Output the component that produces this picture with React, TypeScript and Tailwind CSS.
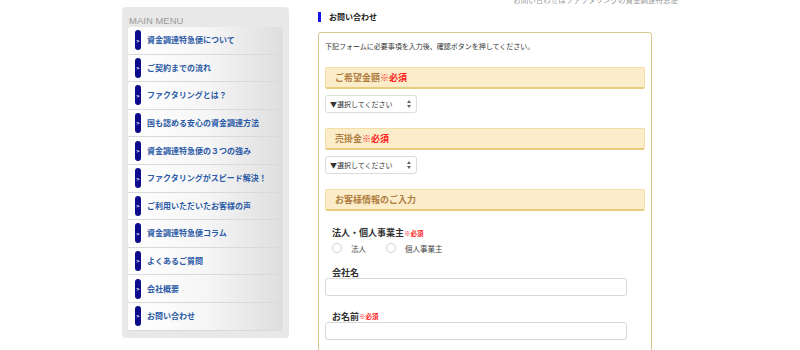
const menu = [
  "資金調達特急便について",
  "ご契約までの流れ",
  "ファクタリングとは？",
  "国も認める安心の資金調達方法",
  "資金調達特急便の３つの強み",
  "ファクタリングがスピード解決！",
  "ご利用いただいたお客様の声",
  "資金調達特急便コラム",
  "よくあるご質問",
  "会社概要",
  "お問い合わせ",
];

const jp = { fontFamily: '"Noto Sans CJK JP", "Noto Sans", sans-serif' };

function SectionHead({ label, required }: { label: string; required?: boolean }) {
  return (
    <div className="h-[22px] flex items-center px-[9px] bg-[#fbedca] border border-[#f3dfa6] border-b-[#e8cd7f] border-b-2 rounded-[2px] text-[9px] font-bold text-[#b07d40]">
      {label}
      {required && <span className="text-[#ff1a1a]">※必須</span>}
    </div>
  );
}

function SelectBox() {
  return (
    <div className="w-[92px] h-[18px] flex items-center justify-between pl-[4px] pr-[5px] border border-[#dcdcdc] rounded-[3px] bg-white text-[7px] text-[#333]">
      <span className="whitespace-nowrap">▼選択してください</span>
      <svg width="4" height="8" viewBox="0 0 4 8" className="fill-[#666]">
        <path d="M2 0 L4 3 L0 3 Z" />
        <path d="M0 5 L4 5 L2 8 Z" />
      </svg>
    </div>
  );
}

function Radio({ label }: { label: string }) {
  return (
    <div className="flex items-center gap-[9px]">
      <span className="w-[10px] h-[10px] rounded-full border border-[#cfcfcf] bg-white" />
      <span className="text-[7.5px] text-[#444]">{label}</span>
    </div>
  );
}

export default function App() {
  return (
    <div className="w-[800px] h-[350px] overflow-hidden bg-white flex items-start" style={jp}>
      <aside className="ml-[122px] mt-[7px] w-[167px] shrink-0 bg-[#e8e8e8] rounded-[4px] px-[6px] pb-[7px]">
        <div
          className="h-[19px] flex items-end pl-[1px] text-[9.5px] leading-[10px] text-[#9a9a9a]"
          style={{ fontFamily: '"Liberation Sans", Arial, sans-serif' }}
        >
          MAIN MENU
        </div>
        <ul className="mt-[1px] rounded-[3px] overflow-hidden">
          {menu.map((m) => (
            <li
              key={m}
              className="h-[27.6px] flex items-center border-b border-[#d9d9d9] bg-gradient-to-r from-white via-[#f6f6f6] to-[#dedede]"
            >
              <span className="ml-[7px] w-[6px] h-[20px] rounded-full bg-[#0b0b8c] flex items-center justify-center text-white text-[5px] font-bold">
                &gt;
              </span>
              <span className="ml-[6px] text-[8px] font-bold text-[#2b5aa6] whitespace-nowrap">{m}</span>
            </li>
          ))}
        </ul>
      </aside>

      <main className="ml-[29px] w-[360px] shrink-0">
        <div className="-mt-[4px] h-[8px] text-right text-[7.5px] leading-[8px] text-[#999] whitespace-nowrap">
          お問い合わせはファクタリングの資金調達特急便
        </div>
        <div className="mt-[8px] flex items-center h-[10px]">
          <span className="w-[3px] h-[10px] bg-[#1414e6]" />
          <span className="ml-[8px] text-[8px] font-bold text-[#222]">お問い合わせ</span>
        </div>

        <div className="mt-[10px] w-[334px] border border-[#d6c68e] rounded-[3px] px-[6px] pt-[7px] pb-[20px]">
          <p className="text-[7px] leading-[12px] text-[#333]">
            下記フォームに必要事項を入力後、確認ボタンを押してください。
          </p>

          <div className="mt-[15px]">
            <SectionHead label="ご希望金額" required />
          </div>
          <div className="mt-[6px]">
            <SelectBox />
          </div>

          <div className="mt-[15px]">
            <SectionHead label="売掛金" required />
          </div>
          <div className="mt-[6px]">
            <SelectBox />
          </div>

          <div className="mt-[15px]">
            <SectionHead label="お客様情報のご入力" />
          </div>

          <div className="mt-[15px] pl-[7px] flex items-end text-[9px] font-bold text-[#333]">
            法人・個人事業主
            <span className="text-[6.5px] text-[#ff1a1a] mb-[1px]">※必須</span>
          </div>
          <div className="mt-[3px] pl-[7px] flex items-center gap-[20px]">
            <Radio label="法人" />
            <Radio label="個人事業主" />
          </div>

          <div className="mt-[13px] pl-[7px] text-[9px] leading-[11px] font-bold text-[#333]">会社名</div>
          <div className="w-[302px] h-[18px] border border-[#d9d9d9] rounded-[3px] bg-white" />

          <div className="mt-[15px] pl-[7px] flex items-end text-[9px] leading-[11px] font-bold text-[#333]">
            お名前
            <span className="text-[6.5px] text-[#ff1a1a]">※必須</span>
          </div>
          <div className="w-[302px] h-[18px] border border-[#d9d9d9] rounded-[3px] bg-white" />
        </div>
      </main>
    </div>
  );
}
